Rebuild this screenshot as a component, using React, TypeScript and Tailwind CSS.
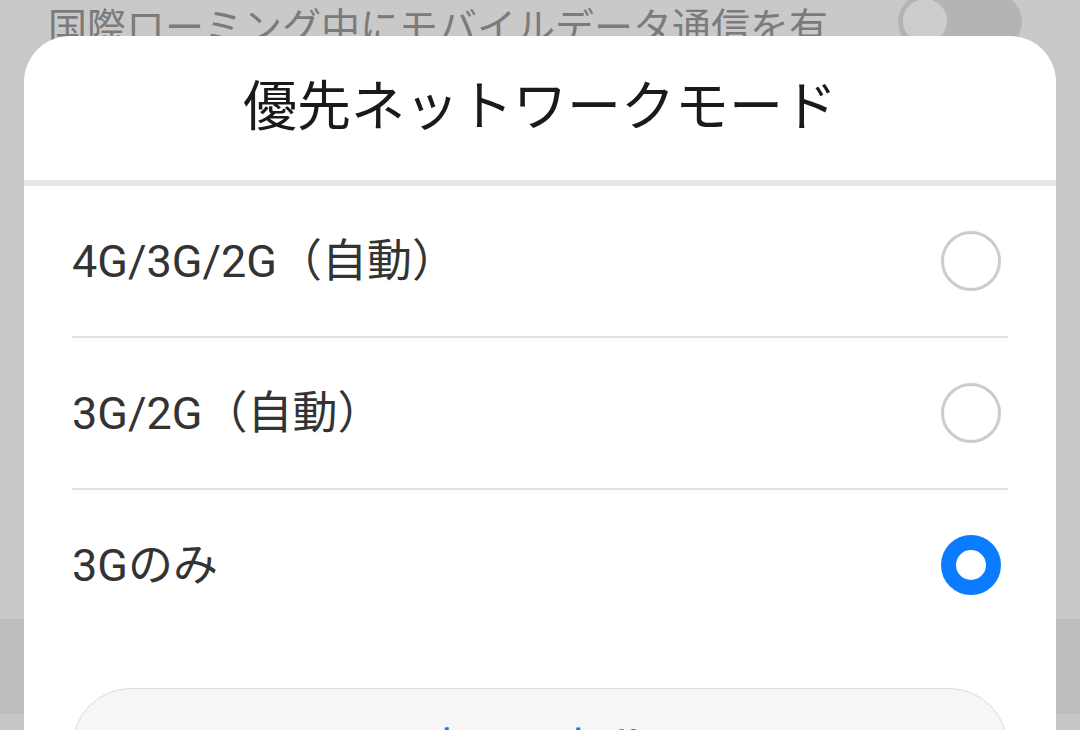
const jp = { fontFamily: 'Roboto, "Noto Sans CJK JP", sans-serif' };

const options = ["4G/3G/2G（自動）", "3G/2G（自動）", "3Gのみ"];

function Radio({ checked }: { checked: boolean }) {
  return checked ? (
    <span className="mr-[7px] size-[60px] shrink-0 rounded-full border-[15px] border-[#0a7cff] bg-white" />
  ) : (
    <span className="mr-[7px] size-[60px] shrink-0 rounded-full border-[3px] border-[#cccccc] bg-white" />
  );
}

export default function App() {
  const selected = 2;
  return (
    <div className="relative h-[730px] w-[1080px] overflow-hidden bg-[#c9c9c9]" style={jp}>
      {/* dimmed settings page behind the dialog */}
      <div className="flex h-[619px] items-start justify-between pl-[48px] pr-[58px]">
        <p className="mt-[4px] text-[39px] leading-[48px] text-[#7b7b7b]">国際ローミング中にモバイルデータ通信を有</p>
        <div className="relative -mt-[6px] h-[56px] w-[124px] rounded-full bg-[#b4b4b4]">
          <span className="absolute left-[5px] top-[5px] size-[44px] rounded-full bg-[#cdcdcd]" />
        </div>
      </div>
      <div className="h-[95px] bg-[#bdbdbd]" />
      <div className="h-[16px] bg-[#c6c6c6]" />

      {/* dialog */}
      <div className="absolute left-[24px] right-[24px] top-[36px] rounded-t-[46px] bg-white">
        <div className="flex h-[144px] items-center justify-center">
          <h1 className="text-[54px] font-normal leading-none text-[#1a1a1a]">優先ネットワークモード</h1>
        </div>
        <div className="h-[6px] bg-[#e6e6e6]" />
        <ul>
          {options.map((label, i) => (
            <li key={label}>
              <div className="flex h-[150px] items-center justify-between px-[48px]">
                <span className="text-[45px] leading-none text-[#333333]">{label}</span>
                <Radio checked={i === selected} />
              </div>
              {i < options.length - 1 && <div className="mx-[48px] h-[2px] bg-[#e3e3e3]" />}
            </li>
          ))}
        </ul>
        <div className="px-[48px] pt-[48px] pb-[40px]">
          <button className="flex h-[118px] w-full items-center justify-center rounded-full border border-[#dcdcdc] bg-[#f6f6f6] text-[45px] leading-none text-[#0a7cff]">
            キャンセル
          </button>
        </div>
      </div>
    </div>
  );
}
